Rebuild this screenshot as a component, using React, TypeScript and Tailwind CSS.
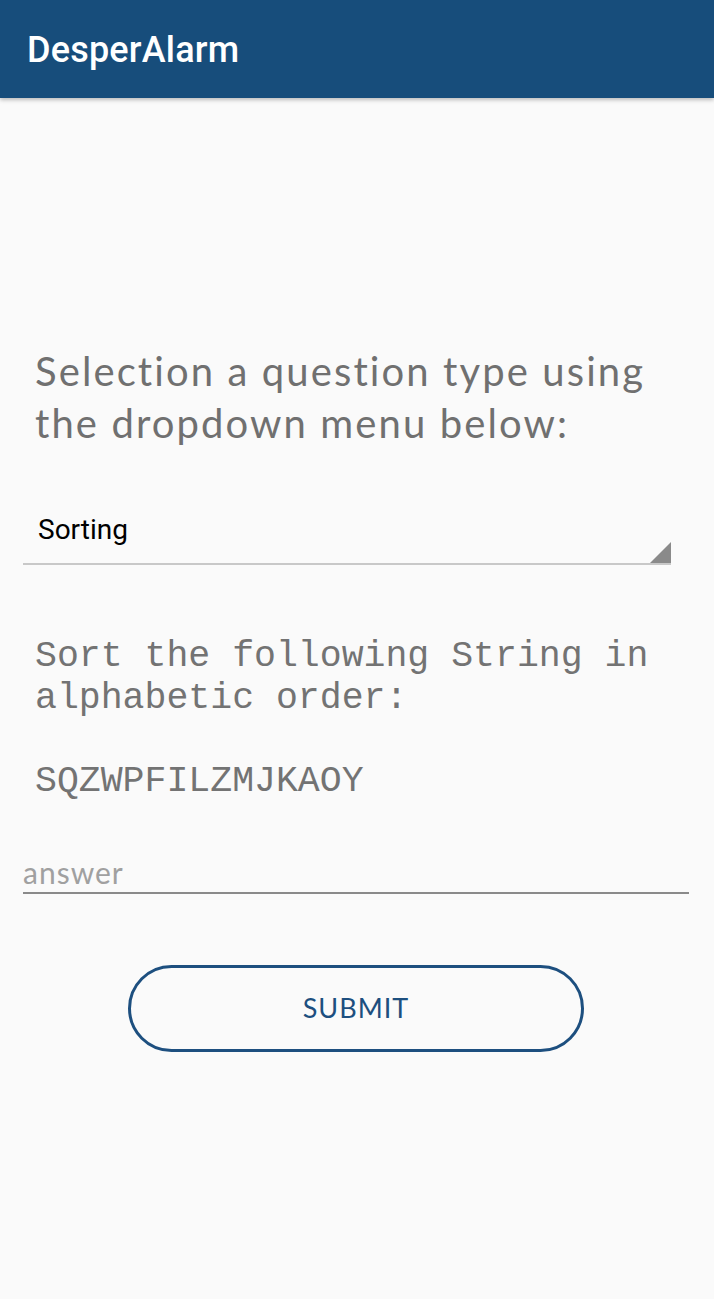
import React from "react";

export default function App() {
  return (
    <div className="min-h-[1299px] w-full bg-[#fafafa] flex flex-col">
      <header className="h-[98px] bg-[#174d7b] flex items-center pl-[27px] shadow-[0_2px_4px_rgba(0,0,0,0.25)] relative z-10">
        <h1 className="text-white text-[36px] font-medium font-['Roboto',sans-serif] leading-none tracking-[0.2px] mt-[2px]">
          DesperAlarm
        </h1>
      </header>
      <main className="flex flex-col pt-[247px]">
        <p className="px-[35px] text-[40px] leading-[52px] text-[#707070] font-['Lato',sans-serif] tracking-[2.1px]">
          Selection a question type using the dropdown menu below:
        </p>
        <div className="mt-[64px] ml-[23px] w-[648px] h-[52px] relative border-b-2 border-[#c8c8c8] flex items-start">
          <span className="pl-[15px] text-[28px] leading-[34px] text-black font-['Roboto',sans-serif]">Sorting</span>
          <div className="absolute right-0 bottom-0 w-0 h-0 border-l-[21px] border-l-transparent border-b-[21px] border-b-[#8a8a8a]" />
        </div>
        <div className="mt-[71px] px-[35px] font-['Liberation_Mono',monospace] text-[36.5px] leading-[41.5px] text-[#737373]">
          <p>Sort the following String in</p>
          <p>alphabetic order:</p>
          <p>&nbsp;</p>
          <p>SQZWPFILZMJKAOY</p>
        </div>
        <div className="mt-[48px] ml-[23px] w-[666px] border-b-2 border-[#8a8a8a] h-[44px] flex items-end pb-[3px]">
          <span className="text-[30px] leading-[34px] text-[#a0a0a0] font-['Lato',sans-serif] tracking-[1px]">answer</span>
        </div>
        <div className="mt-[71px] flex justify-center">
          <button className="w-[456px] h-[87px] rounded-full border-[3px] border-[#1d4f7f] text-[#1d4f7f] text-[27px] font-['Lato',sans-serif] tracking-[1px] ml-[-2px]">
            SUBMIT
          </button>
        </div>
      </main>
    </div>
  );
}
